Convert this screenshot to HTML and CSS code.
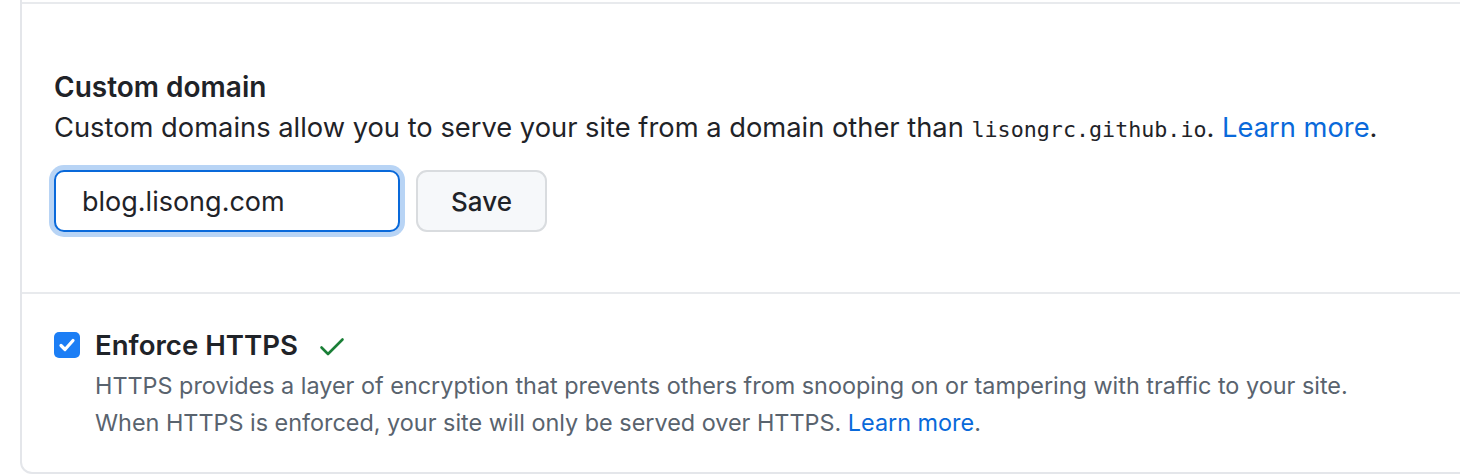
FILE: index.html
```html
<!DOCTYPE html>
<html lang="en">
<head>
<meta charset="utf-8">
<title>Custom domain</title>
<link rel="stylesheet" href="styles.css">
</head>
<body>
<div class="box">
  <section class="section domain">
    <h2 class="heading">Custom domain</h2>
    <p class="desc">Custom domains allow you to serve your site from a domain other than <code class="mono">lisongrc.github.io</code>. <a class="link" href="#">Learn more</a>.</p>
    <form class="row">
      <input class="input" type="text" value="blog.lisong.com">
      <button class="btn" type="button">Save</button>
    </form>
  </section>
  <section class="section https">
    <div class="check-row">
      <span class="checkbox">
        <svg width="26" height="26" viewBox="0 0 26 26"><path d="M7 13.5l4 4 8-9" fill="none" stroke="#fff" stroke-width="3.2" stroke-linecap="round" stroke-linejoin="round"/></svg>
      </span>
      <span class="label">Enforce HTTPS</span>
      <svg class="ok" width="26" height="20" viewBox="0 0 26 20"><path d="M2.5 10.5l6.5 6.5L23.5 2.5" fill="none" stroke="#1a7f37" stroke-width="2.6" stroke-linecap="round" stroke-linejoin="round"/></svg>
    </div>
    <p class="note">HTTPS provides a layer of encryption that prevents others from snooping on or tampering with traffic to your site.<br>When HTTPS is enforced, your site will only be served over HTTPS. <a class="link" href="#">Learn more</a>.</p>
  </section>
</div>
</body>
</html>
```
FILE: styles.css
```css
html, body {
  margin: 0;
  padding: 0;
  background: #ffffff;
  overflow: hidden;
}
body {
  font-family: Inter, "Noto Sans", "Liberation Sans", sans-serif;
  color: #1f2328;
}
.box {
  margin-left: 20px;
  width: 1500px;
  height: 474px;
  box-sizing: border-box;
  padding-top: 2px;
  border: 2px solid #e4e6ea;
  border-top: none;
  border-radius: 0 0 12px 12px;
}
.section {
  border-top: 2px solid #e8eaed;
  padding-left: 32px;
}
.domain {
  padding-top: 62px;
  padding-bottom: 60px;
}
.heading {
  margin: 0;
  font-size: 28px;
  line-height: 42px;
  font-weight: 600;
}
.desc {
  margin: 1px 0 0;
  font-size: 27.3px;
  line-height: 37px;
}
.mono {
  font-family: "DejaVu Sans Mono", "Liberation Mono", monospace;
  font-size: 21.7px;
}
.link {
  color: #0969da;
  text-decoration: none;
}
.row {
  display: flex;
  gap: 16px;
  margin-top: 22px;
}
.input {
  box-sizing: border-box;
  width: 346px;
  height: 62px;
  margin: 0;
  padding: 0 24px 0 26px;
  border: 2px solid #0969da;
  border-radius: 10px;
  box-shadow: 0 0 0 5px #b8d4f5;
  outline: none;
  font-family: inherit;
  font-size: 27px;
  color: #1f2328;
  background: #fff;
}
.btn {
  box-sizing: border-box;
  width: 131px;
  height: 62px;
  margin: 0;
  border: 2px solid #d9dcdf;
  border-radius: 11px;
  background: #f6f8fa;
  font-family: inherit;
  font-size: 26px;
  font-weight: 500;
  color: #1f2328;
}
.https {
  padding-top: 30px;
}
.check-row {
  display: flex;
  align-items: center;
  height: 42px;
}
.checkbox {
  display: flex;
  width: 26px;
  height: 26px;
  border-radius: 5px;
  background: #1c7ef5;
  margin-right: 15px;
}
.label {
  font-size: 27.6px;
  line-height: 42px;
  font-weight: 600;
}
.ok {
  margin-left: 21px;
  margin-top: 4px;
}
.note {
  margin: 1px 0 0 41px;
  font-size: 23.4px;
  line-height: 37px;
  color: #59636e;
}
```
